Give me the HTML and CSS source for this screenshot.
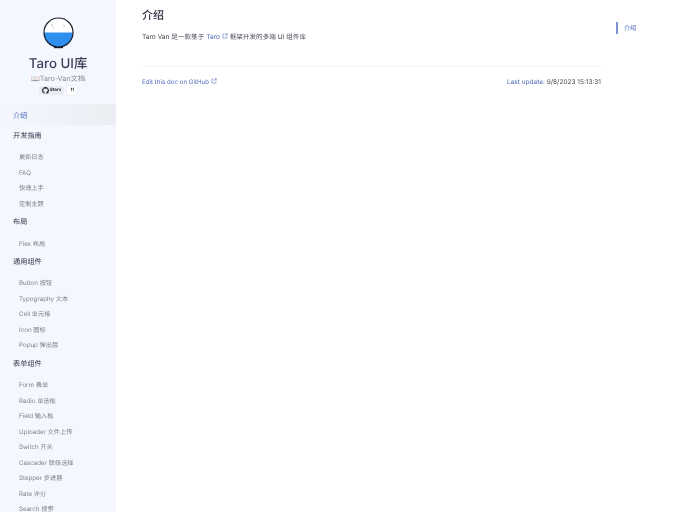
FILE: index.html
```html
<!DOCTYPE html>
<html lang="zh-CN">
	<head>
		<meta charset="UTF-8" />
		<meta name="viewport" content="width=device-width, initial-scale=1.0" />
		<title>介绍 | Taro UI库</title>
		<link rel="stylesheet" href="styles.css">
	</head>
	<body>
		<aside class="sidebar">
			<div class="brand">
				<svg class="logo" width="31" height="32" viewBox="0 0 31 32">
					<circle cx="15.5" cy="15.5" r="14.5" fill="#fff" />
					<path d="M1 15.500h29a14.500 14.500 0 0 1-29 0z" fill="#2f8fee" />
					<circle cx="15.5" cy="15.5" r="14.5" fill="none" stroke="#1a2030" stroke-width="1.2" />
					<path d="M11 30.500h9" stroke="#1a2030" stroke-width="1.400" />
					<path d="M8 8.500l2-1M11 10l-1.500 .5M21 8v1.500" stroke="#999" stroke-width=".7" fill="none" />
				</svg>
				<div class="brand-title">Taro UI库</div>
				<div class="brand-sub">📖Taro-Van文档</div>
				<div class="stars">
					<span class="stars-btn">
						<svg width="7" height="7" viewBox="0 0 16 16"><path fill="#24292f" d="M8 0C3.580 0 0 3.580 0 8c0 3.540 2.290 6.530 5.470 7.590.4.070.55-.170.55-.380 0-.190-.010-.820-.010-1.490-2.010.370-2.530-.490-2.690-.940-.090-.230-.480-.940-.820-1.130-.280-.150-.680-.520-.010-.530.630-.010 1.080.580 1.230.820.720 1.210 1.870.870 2.330.660.070-.520.280-.870.510-1.070-1.780-.200-3.640-.890-3.640-3.950 0-.870.310-1.590.820-2.150-.080-.200-.360-1.020.080-2.120 0 0 .670-.210 2.200.820a7.500 7.500 0 0 1 4 0c1.530-1.040 2.200-.820 2.200-.820.440 1.100.160 1.920.080 2.120.510.560.820 1.270.820 2.150 0 3.070-1.870 3.750-3.650 3.950.290.250.540.730.540 1.480 0 1.070-.010 1.930-.010 2.200 0 .210.150.460.550.380A8 8 0 0 0 16 8c0-4.420-3.580-8-8-8z" /></svg>
						Stars
					</span>
					<span class="stars-count">11</span>
				</div>
			</div>
			<nav class="menu">
				<a class="menu-top active">介绍</a>
				<div class="menu-group">开发指南</div>
				<ul class="menu-list">
					<li>更新日志</li>
					<li>FAQ</li>
					<li>快速上手</li>
					<li>定制主题</li>
				</ul>
				<div class="menu-group">布局</div>
				<ul class="menu-list">
					<li>Flex 布局</li>
				</ul>
				<div class="menu-group">通用组件</div>
				<ul class="menu-list">
					<li>Button 按钮</li>
					<li>Typography 文本</li>
					<li>Cell 单元格</li>
					<li>Icon 图标</li>
					<li>Popup 弹出层</li>
				</ul>
				<div class="menu-group">表单组件</div>
				<ul class="menu-list">
					<li>Form 表单</li>
					<li>Radio 单选框</li>
					<li>Field 输入框</li>
					<li>Uploader 文件上传</li>
					<li>Switch 开关</li>
					<li>Cascader 联级选择</li>
					<li>Stepper 步进器</li>
					<li>Rate 评分</li>
					<li>Search 搜索</li>
				</ul>
			</nav>
		</aside>

		<main class="content">
			<article class="doc">
				<h1>介绍</h1>
				<p>Taro Van 是一款基于 <a class="link">Taro <svg class="ext" width="6" height="6" viewBox="0 0 12 12"><path d="M5 2H2v8h8V7M7 1.500h3.500V5M10.500 1.500L6 6" fill="none" stroke="currentColor" stroke-width="1.100" /></svg></a> 框架开发的多端 UI 组件库</p>
				<hr class="rule">
				<footer class="doc-footer">
					<a class="link">Edit this doc on GitHub <svg class="ext" width="6" height="6" viewBox="0 0 12 12"><path d="M5 2H2v8h8V7M7 1.500h3.500V5M10.500 1.500L6 6" fill="none" stroke="currentColor" stroke-width="1.100" /></svg></a>
					<span class="updated"><span class="link">Last update:</span> 9/8/2023 15:13:31</span>
				</footer>
			</article>
			<aside class="toc">
				<a class="toc-item">介绍</a>
			</aside>
		</main>
	</body>
</html>
```

FILE: styles.css
```css
* {
	box-sizing: border-box;
}

body {
	margin: 0;
	display: flex;
	height: 512px;
	overflow: hidden;
	background-color: #fff;
	color: #4a4d57;
	font-family: Inter, "Noto Sans CJK SC", sans-serif;
	font-size: 6.2px;
	text-rendering: geometricPrecision;
}

.sidebar {
	width: 116px;
	flex-shrink: 0;
	overflow: hidden;
	background-color: #f5f7fe;
	will-change: transform;
}

.brand {
	display: flex;
	flex-direction: column;
	align-items: center;
	padding-top: 17px;
}

.logo {
	display: block;
}

.brand-title {
	margin-top: 6px;
	font-size: 13.300px;
	line-height: 18px;
	font-weight: 500;
	color: #3a3f55;
}

.brand-sub {
	font-size: 7.200px;
	line-height: 11px;
	color: #8a8d98;
}

.stars {
	display: flex;
	gap: 3px;
	margin-top: 2px;
	font-size: 4.500px;
	line-height: 9px;
	font-weight: 700;
	color: #24292f;
}

.stars-btn {
	display: flex;
	align-items: center;
	gap: 1px;
	padding: 0 3px;
	background-color: #ebedf2;
	border-radius: 2px;
}

.stars-count {
	padding: 0 3px;
	background-color: #fff;
	border-radius: 2px;
	box-shadow: 0 0 0 .5px #e6e8ef;
}

.menu {
	margin-top: 9px;
}

.menu-top {
	display: block;
	height: 21px;
	padding-left: 13px;
	font-size: 7.200px;
	line-height: 23px;
}

.active {
	color: #4e6bbd;
	background: linear-gradient(to right, #f5f7fe, #ebedf3);
}

.menu-group {
	padding: 2px 0 0 13px;
	font-size: 7.200px;
	line-height: 18px;
	color: #33374a;
}

.menu-list {
	margin: 0;
	padding: 4.250px 0 0 19px;
	list-style: none;
	color: #7d8290;
}

.menu-list li {
	height: 15.500px;
	padding-top: 1px;
	line-height: 15.500px;
	white-space: nowrap;
}

.content {
	flex: 1;
	display: flex;
	will-change: transform;
}

.doc {
	width: 485px;
	padding: 8px 0 0 26px;
}

h1 {
	margin: 0;
	font-size: 11px;
	line-height: 15px;
	font-weight: 500;
	color: #2c3040;
}

.doc p {
	margin: 7px 0 0;
	font-size: 6.600px;
	line-height: 14px;
}

.link {
	color: #4e6bbd;
}

.ext {
	vertical-align: 0;
}

.rule {
	margin: 22px 0 0;
	border: 0;
	border-top: 1px solid #f6f6f8;
}

.doc-footer {
	display: flex;
	justify-content: space-between;
	align-items: baseline;
	margin-top: 9px;
	line-height: 12px;
}

.updated {
	font-size: 6.500px;
}

.toc {
	margin-top: 22px;
	margin-left: 15px;
}

.toc-item {
	display: block;
	height: 12px;
	padding: 1px 0 0 6px;
	border-left: 2px solid #7f94d6;
	color: #4e6bbd;
	line-height: 12px;
}
```
